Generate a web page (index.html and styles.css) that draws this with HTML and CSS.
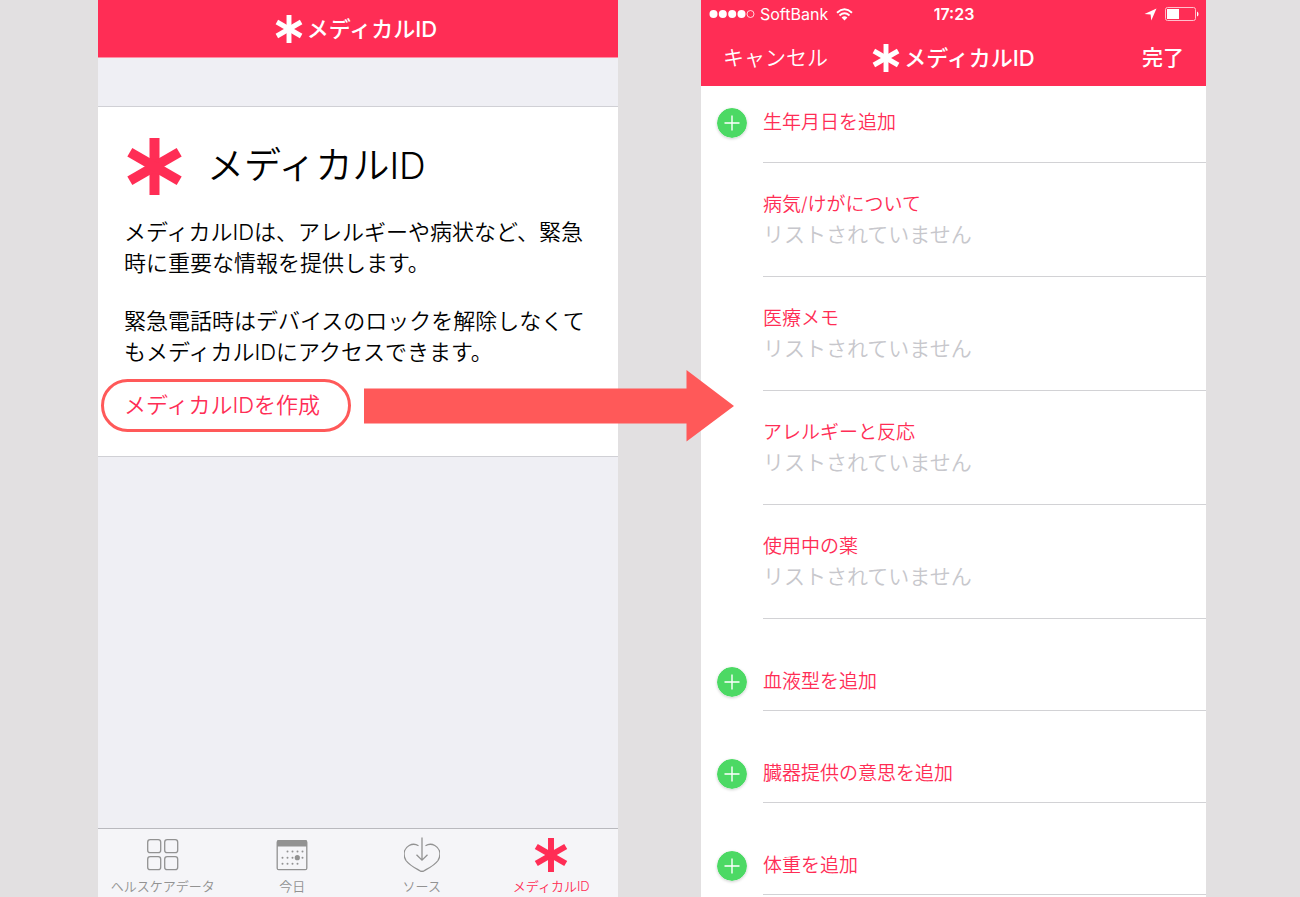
FILE: index.html
```html
<!DOCTYPE html>
<html lang="ja">
<head>
<meta charset="utf-8">
<meta name="viewport" content="width=device-width, initial-scale=1">
<title>メディカルID</title>
<link rel="stylesheet" href="styles.css">
</head>
<body>
<svg class="defs" aria-hidden="true">
  <symbol id="star" viewBox="0 0 57 57">
    <g fill="currentColor">
      <rect x="23.5" y="0" width="10" height="57"/>
      <rect x="23.5" y="0" width="10" height="57" transform="rotate(60 28.5 28.5)"/>
      <rect x="23.5" y="0" width="10" height="57" transform="rotate(-60 28.5 28.5)"/>
    </g>
  </symbol>
  <symbol id="plus" viewBox="0 0 30 30">
    <circle cx="15" cy="15" r="15" fill="#4cd964"/>
    <path d="M15 7.5v15M7.5 15h15" stroke="#fff" stroke-width="1.4" fill="none"/>
  </symbol>
</svg>
<main class="stage">
  <section class="phone phone-intro">
    <header class="bar">
      <h2 class="bar-title"><svg class="star-small"><use href="#star"/></svg>メディカルID</h2>
    </header>
    <div class="card">
      <div class="card-head">
        <svg class="star-large"><use href="#star"/></svg>
        <h1>メディカルID</h1>
      </div>
      <p>メディカルIDは、アレルギーや病状など、緊急時に重要な情報を提供します。</p>
      <p>緊急電話時はデバイスのロックを解除しなくてもメディカルIDにアクセスできます。</p>
      <div class="create">
        <button class="create-button" type="button">メディカルIDを作成</button>
        <svg class="arrow" viewBox="0 0 370 72" preserveAspectRatio="none" aria-hidden="true"><path d="M0 18.500H322.500V0L370 36L322.500 71.500V53.500H0z" fill="#ff5959"/></svg>
      </div>
    </div>
    <nav class="tabs">
      <a class="tab" href="#data">
        <svg viewBox="0 0 36 36" fill="none" stroke="currentColor" stroke-width="1.300"><rect x="2.700" y="2.700" width="13" height="13" rx="2.500"/><rect x="19.700" y="2.700" width="13" height="13" rx="2.500"/><rect x="2.700" y="19.700" width="13" height="13" rx="2.500"/><rect x="19.700" y="19.700" width="13" height="13" rx="2.500"/></svg>
        ヘルスケアデータ
      </a>
      <a class="tab" href="#today">
        <svg viewBox="0 0 36 36" fill="none" stroke="currentColor"><rect x="3.200" y="3.700" width="29.600" height="29" rx="1.500" stroke-width="1.300"/><path d="M3 9.500V4.500Q3 3 4.500 3H31.500Q33 3 33 4.500V9.500z" fill="currentColor" stroke="none"/><path d="M13.500 14.500h16M8.500 20.700h21M8.500 26.800h16" stroke-width="2" stroke-linecap="round" stroke-dasharray="0 5"/><circle cx="23.300" cy="20.700" r="2.600" fill="currentColor" stroke="none"/></svg>
        今日
      </a>
      <a class="tab" href="#source">
        <svg viewBox="0 0 36 36" fill="none" stroke="currentColor" stroke-width="1.300"><path d="M14.500 8.700C12 7.200 8.300 6.800 5.200 8.500C-0.500 11.700-1.300 18 2 23.500C5.500 28.500 12 31.500 16 33.800Q18 34.800 20 33.800C24 31.500 30.500 28.500 34 23.500C37.300 18 36.500 11.700 30.800 8.500C27.700 6.800 24 7.200 21.500 8.700"/><path d="M18 .5V23M12.500 17.700L18 23.200l5.500-5.500"/></svg>
        ソース
      </a>
      <a class="tab active" href="#medical">
        <svg viewBox="0 0 36 36"><use href="#star" x="1" y="1" width="34" height="34"/></svg>
        メディカルID
      </a>
    </nav>
  </section>

  <section class="phone phone-form">
    <header class="form-header">
      <div class="status">
        <div class="carrier">
          <svg class="dots" viewBox="0 0 46 10" fill="#fff"><circle cx="4.500" cy="5" r="4"/><circle cx="13.800" cy="5" r="4"/><circle cx="23.200" cy="5" r="4"/><circle cx="32.500" cy="5" r="4"/><circle cx="41.500" cy="5" r="3.500" fill="none" stroke="#fff" stroke-width=".8"/></svg>
          <span>SoftBank</span>
          <svg class="wifi" viewBox="0 0 17 13" fill="none" stroke="#fff" stroke-width="1.900"><path d="M1 4.700Q8.500-2 16 4.700M3.500 7.500Q8.500 3.200 13.500 7.500"/><path d="M5.600 9.500Q8.500 7 11.400 9.500L8.500 12.500z" fill="#fff" stroke="none"/></svg>
        </div>
        <span class="time">17:23</span>
        <div class="indicators">
          <svg class="location" viewBox="0 0 13 13"><path d="M12.500.5L7.300 12.500L6.600 6.500L.5 6z" fill="#fff"/></svg>
          <svg class="battery" viewBox="0 0 34 14"><rect x=".5" y=".5" width="30" height="13" rx="2" fill="none" stroke="#ffc0cc"/><rect x="2" y="2" width="12" height="10" fill="#fff"/><path d="M32 4.500q1.500.5 1.500 2.500t-1.500 2.500z" fill="#fff"/></svg>
        </div>
      </div>
      <div class="form-nav">
        <button type="button" class="cancel">キャンセル</button>
        <h2 class="bar-title"><svg class="star-small"><use href="#star"/></svg>メディカルID</h2>
        <button type="button" class="done">完了</button>
      </div>
    </header>
    <form class="rows">
      <button type="button" class="add first"><svg><use href="#plus"/></svg><span>生年月日を追加</span></button>
      <div class="field"><label for="condition">病気/けがについて</label><input id="condition" placeholder="リストされていません"></div>
      <div class="field"><label for="memo">医療メモ</label><input id="memo" placeholder="リストされていません"></div>
      <div class="field"><label for="allergy">アレルギーと反応</label><input id="allergy" placeholder="リストされていません"></div>
      <div class="field"><label for="medicine">使用中の薬</label><input id="medicine" placeholder="リストされていません"></div>
      <button type="button" class="add"><svg><use href="#plus"/></svg><span>血液型を追加</span></button>
      <button type="button" class="add"><svg><use href="#plus"/></svg><span>臓器提供の意思を追加</span></button>
      <button type="button" class="add"><svg><use href="#plus"/></svg><span>体重を追加</span></button>
    </form>
  </section>
</main>
</body>
</html>
```
FILE: styles.css
```css
* {
  box-sizing: border-box;
}

body {
  margin: 0;
  background: #e2e0e1;
  color: #000;
  font-family: Inter, "Noto Sans CJK JP", sans-serif;
  font-weight: 350;
}

h1, h2, p {
  margin: 0;
}

button, input {
  margin: 0;
  padding: 0;
  border: 0;
  background: none;
  color: inherit;
  font: inherit;
}

svg {
  display: block;
  flex: none;
}

.defs {
  position: absolute;
  width: 0;
  height: 0;
}

.stage {
  display: grid;
  grid-template-columns: 520fr 505fr;
  column-gap: 83px;
  min-height: 100vh;
  padding: 0 94px 0 98px;
}

.phone {
  display: flex;
  flex-direction: column;
  min-width: 0;
}

.phone-intro {
  background: #efeff4;
}

.phone-form {
  background: #fff;
}

.bar {
  display: flex;
  align-items: center;
  justify-content: center;
  height: 58px;
  padding-right: 4px;
  border-bottom: 1px solid #ff8fa5;
  background: #ff2d55;
  color: #fff;
}

.bar-title {
  display: flex;
  align-items: center;
  gap: 4px;
  font-size: 22px;
  font-weight: 500;
  line-height: 30px;
  white-space: nowrap;
}

.star-small {
  width: 28px;
  height: 28px;
}

.card {
  margin-top: 48px;
  padding: 31px 26px 24px;
  border-top: 1px solid #d0d0d5;
  border-bottom: 1px solid #d0d0d5;
  background: #fff;
}

.card-head {
  display: flex;
  align-items: center;
  gap: 24px;
  padding-left: 2px;
  margin-bottom: 22px;
}

.star-large {
  width: 57px;
  height: 57px;
  color: #ff2d55;
}

h1 {
  font-size: 37px;
  font-weight: 350;
  line-height: 54px;
  padding-bottom: 2px;
}

.card p {
  font-size: 22px;
  line-height: 31px;
}

.card p + p {
  margin-top: 27px;
}

.create {
  position: relative;
  display: flex;
  margin: 11px 0 0 -23px;
}

.create-button {
  height: 53px;
  padding: 0 28px 6px 20px;
  border: 3px solid #ff5959;
  border-radius: 27px;
  color: #ff2d55;
  font-size: 22px;
  white-space: nowrap;
}

.arrow {
  position: absolute;
  z-index: 2;
  top: -9px;
  left: 263px;
  width: 370px;
  height: 72px;
}

.tabs {
  display: grid;
  grid-template-columns: repeat(4, 1fr);
  margin-top: auto;
  padding: 8px 2px 1px 0;
  border-top: 1px solid #b9b9be;
  background: #f5f5f8;
}

.tab {
  display: flex;
  flex-direction: column;
  align-items: center;
  gap: 3px;
  color: #929292;
  font-size: 13px;
  line-height: 20px;
  text-decoration: none;
  white-space: nowrap;
}

.tab svg {
  width: 36px;
  height: 36px;
}

.tab.active {
  color: #ff2d55;
}

.form-header {
  background: #ff2d55;
  color: #fff;
}

.status,
.form-nav {
  display: grid;
  grid-template-columns: 1fr auto 1fr;
  align-items: center;
}

.status {
  height: 28px;
  padding: 0 7px 0 8px;
  font-size: 16px;
  font-weight: 400;
}

.carrier,
.indicators {
  display: flex;
  align-items: center;
}

.carrier {
  gap: 5px;
}

.indicators {
  justify-content: flex-end;
  gap: 8px;
}

.dots {
  width: 46px;
  height: 10px;
}

.wifi {
  width: 17px;
  height: 13px;
  margin-left: 3px;
}

.location {
  width: 13px;
  height: 13px;
}

.battery {
  width: 34px;
  height: 14px;
}

.time {
  font-weight: 600;
}

.form-nav {
  height: 58px;
  padding: 2px 22px 0;
  font-size: 21px;
}

.cancel,
.done {
  padding-bottom: 5px;
}

.cancel {
  justify-self: start;
}

.done {
  justify-self: end;
  font-weight: 500;
}

.rows {
  color: #ff2d55;
  font-size: 19px;
  line-height: 30px;
}

.add {
  display: flex;
  gap: 16px;
  width: 100%;
  padding-left: 16px;
  text-align: left;
}

.add svg {
  width: 30px;
  height: 30px;
  margin-top: 48px;
  border-radius: 50%;
  box-shadow: 0 1px 3px #00000030;
}

.add span {
  flex: 1;
  padding: 48px 0 13px;
  border-bottom: 1px solid #d2d2d5;
}

.add.first svg {
  margin-top: 22px;
}

.add.first span {
  padding: 22px 0 24px;
}

.field {
  display: flex;
  flex-direction: column;
  margin-left: 62px;
  padding: 26px 0;
  border-bottom: 1px solid #d2d2d5;
}

.field label {
  line-height: 31px;
}

.field input {
  width: 100%;
  height: 30px;
  font-size: 21px;
}

.field input::placeholder {
  color: #c7c7cc;
  opacity: 1;
}
```
